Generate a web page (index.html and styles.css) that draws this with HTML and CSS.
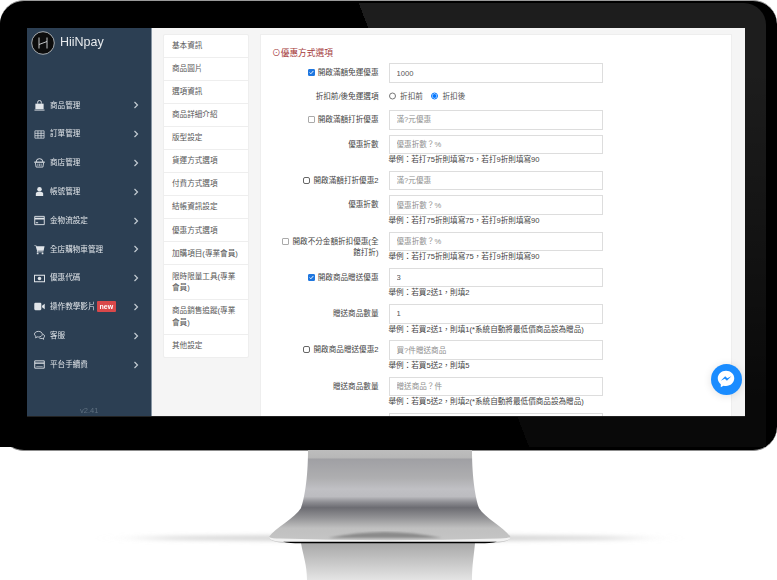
FILE: index.html
```html
<!DOCTYPE html>
<html lang="zh-Hant">
<head>
    <meta charset="UTF-8">
    <meta name="viewport" content="width=device-width, initial-scale=1.0">
    <title>HiiNpay</title>
    <link rel="stylesheet" href="styles.css">
</head>
<body>
    <div class="monitor">
        <div class="bezel">
            <div class="screen">
                <aside class="sidebar">
                    <div class="brand">
                        <svg class="brand-logo" viewBox="0 0 24 24">
                            <circle cx="12" cy="12" r="11.3" fill="#0c0c0c" stroke="#c9ced2" stroke-width="0.8"/>
                            <path d="M8 6.500V17.500M16 6.500V17.500M8 13.500L16 10.500" fill="none" stroke="#d8dbde" stroke-width="0.9"/>
                        </svg>
                        <span class="brand-name">HiiNpay</span>
                    </div>
                    <ul class="menu">
                        <li>
                            <svg class="menu-icon" viewBox="0 0 12 12"><path d="M4 4V2.500a2 2 0 0 1 4 0V4" fill="none" stroke="currentColor"/><path d="M1.500 4h9v6h-9z" fill="currentColor"/><path d="M.5 10.500h11v1H.5z" fill="currentColor"/></svg>
                            <span>商品管理</span>
                            <svg class="chevron" viewBox="0 0 6 8"><path d="M1.500 1L4.500 4L1.500 7" fill="none" stroke="currentColor" stroke-width="1.200"/></svg>
                        </li>
                        <li>
                            <svg class="menu-icon" viewBox="0 0 12 12"><path d="M1 2h10v8H1zM1 4.700h10M1 7.300h10M4.300 2v8M7.700 2v8" fill="none" stroke="currentColor" stroke-width="0.8"/></svg>
                            <span>訂單管理</span>
                            <svg class="chevron" viewBox="0 0 6 8"><path d="M1.500 1L4.500 4L1.500 7" fill="none" stroke="currentColor" stroke-width="1.200"/></svg>
                        </li>
                        <li>
                            <svg class="menu-icon" viewBox="0 0 12 12"><path d="M2.300 5.500a3.700 3.700 0 0 1 7.400 0" fill="none" stroke="currentColor"/><path d="M.3 5h11.400v1.300H.3z" fill="currentColor"/><path d="M1.500 6.300l.8 4.700h7.400l.8-4.700" fill="none" stroke="currentColor" stroke-width="0.9"/><path d="M4.200 7.200V10M6 7.200V10M7.800 7.200V10" stroke="currentColor" stroke-width="0.7"/></svg>
                            <span>商店管理</span>
                            <svg class="chevron" viewBox="0 0 6 8"><path d="M1.500 1L4.500 4L1.500 7" fill="none" stroke="currentColor" stroke-width="1.200"/></svg>
                        </li>
                        <li>
                            <svg class="menu-icon" viewBox="0 0 12 12"><circle cx="6" cy="3.500" r="2.500" fill="currentColor"/><path d="M2 11V8.500C2 7 3.500 6.300 6 6.300S10 7 10 8.500V11z" fill="currentColor"/></svg>
                            <span>帳號管理</span>
                            <svg class="chevron" viewBox="0 0 6 8"><path d="M1.500 1L4.500 4L1.500 7" fill="none" stroke="currentColor" stroke-width="1.200"/></svg>
                        </li>
                        <li>
                            <svg class="menu-icon" viewBox="0 0 12 12"><path d="M.8 1.500h10.400v9H.8z" fill="none" stroke="currentColor"/><path d="M.8 3h10.400v2H.8zM2 8h2.500v1H2z" fill="currentColor"/></svg>
                            <span>金物流設定</span>
                            <svg class="chevron" viewBox="0 0 6 8"><path d="M1.500 1L4.500 4L1.500 7" fill="none" stroke="currentColor" stroke-width="1.200"/></svg>
                        </li>
                        <li>
                            <svg class="menu-icon" viewBox="0 0 12 12"><path d="M.3 1.500h2.200l.3 1h8.700l-1 4.800H4l-.2.900h6.500v.8H3l.3-1.700-1.500-5H.3z" fill="currentColor"/><circle cx="4" cy="10.300" r="1" fill="currentColor"/><circle cx="9.300" cy="10.300" r="1" fill="currentColor"/></svg>
                            <span>全店購物車管理</span>
                            <svg class="chevron" viewBox="0 0 6 8"><path d="M1.500 1L4.500 4L1.500 7" fill="none" stroke="currentColor" stroke-width="1.200"/></svg>
                        </li>
                        <li>
                            <svg class="menu-icon" viewBox="0 0 12 12"><path d="M.5 2.500h11v7H.5z" fill="none" stroke="currentColor" stroke-width="1.100"/><circle cx="6" cy="6" r="1.900" fill="currentColor"/></svg>
                            <span>優惠代碼</span>
                            <svg class="chevron" viewBox="0 0 6 8"><path d="M1.500 1L4.500 4L1.500 7" fill="none" stroke="currentColor" stroke-width="1.200"/></svg>
                        </li>
                        <li>
                            <svg class="menu-icon" viewBox="0 0 12 12"><rect x="0.300" y="2" width="7.700" height="8" rx="1.200" fill="currentColor"/><path d="M8.800 5.300l2.900-2.300v6l-2.900-2.300z" fill="currentColor"/></svg>
                            <span>操作教學影片</span>
                            <span class="badge">new</span>
                            <svg class="chevron" viewBox="0 0 6 8"><path d="M1.500 1L4.500 4L1.500 7" fill="none" stroke="currentColor" stroke-width="1.200"/></svg>
                        </li>
                        <li>
                            <svg class="menu-icon" viewBox="0 0 12 12"><path d="M4.800 1.500c2.400 0 4.300 1.300 4.300 3.100S7.200 7.700 4.800 7.700c-.5 0-1 0-1.400-.2L1.800 8.600l.3-1.700C1.100 6.300.5 5.500.5 4.600c0-1.800 1.900-3.100 4.300-3.100z" fill="none" stroke="currentColor" stroke-width="0.9"/><path d="M10 4.500c1 .6 1.500 1.400 1.500 2.200s-.5 1.500-1.200 2l.2 1.500-1.500-1c-1 .2-2.300.1-3.200-.4" fill="none" stroke="currentColor" stroke-width="0.9"/></svg>
                            <span>客服</span>
                            <svg class="chevron" viewBox="0 0 6 8"><path d="M1.500 1L4.500 4L1.500 7" fill="none" stroke="currentColor" stroke-width="1.200"/></svg>
                        </li>
                        <li>
                            <svg class="menu-icon" viewBox="0 0 12 12"><path d="M.8 2h10.400v8H.8z" fill="none" stroke="currentColor"/><path d="M.8 3.700h10.400v1.500H.8zM2.500 7.500h7v.8h-7z" fill="currentColor"/></svg>
                            <span>平台手續費</span>
                            <svg class="chevron" viewBox="0 0 6 8"><path d="M1.500 1L4.500 4L1.500 7" fill="none" stroke="currentColor" stroke-width="1.200"/></svg>
                        </li>
                    </ul>
                    <div class="version">v2.41</div>
                </aside>

                <div class="content">
                    <ul class="tabs">
                        <li>基本資訊</li>
                        <li>商品圖片</li>
                        <li>選項資訊</li>
                        <li>商品詳細介紹</li>
                        <li>版型設定</li>
                        <li>貨運方式選項</li>
                        <li>付費方式選項</li>
                        <li>結帳資訊設定</li>
                        <li>優惠方式選項</li>
                        <li>加購項目(專業會員)</li>
                        <li>限時限量工具(專業會員)</li>
                        <li>商品銷售追蹤(專業會員)</li>
                        <li>其他設定</li>
                    </ul>

                    <section class="panel">
                        <h2 class="panel-title">⊙優惠方式選項</h2>
                        <form class="form">
                            <label class="field-label"><input class="check" type="checkbox" checked> 開啟滿額免運優惠</label>
                            <div class="field tall"><input class="text-input" type="text" value="1000"></div>

                            <label class="field-label radio-label">折扣前/後免運選項</label>
                            <div class="field radios">
                                <label><input type="radio" name="when"> 折扣前</label>
                                <label><input type="radio" name="when" checked> 折扣後</label>
                            </div>

                            <label class="field-label"><input class="check" type="checkbox"> 開啟滿額打折優惠</label>
                            <div class="field"><input class="text-input" type="text" placeholder="滿?元優惠"></div>

                            <label class="field-label">優惠折數</label>
                            <div class="field">
                                <input class="text-input" type="text" placeholder="優惠折數？%">
                                <p class="hint">舉例：若打75折則填寫75，若打9折則填寫90</p>
                            </div>

                            <label class="field-label"><input class="check dark" type="checkbox"> 開啟滿額打折優惠2</label>
                            <div class="field"><input class="text-input" type="text" placeholder="滿?元優惠"></div>

                            <label class="field-label">優惠折數</label>
                            <div class="field">
                                <input class="text-input" type="text" placeholder="優惠折數？%">
                                <p class="hint">舉例：若打75折則填寫75，若打9折則填寫90</p>
                            </div>

                            <label class="field-label"><input class="check" type="checkbox"> 開啟不分金額折扣優惠(全館打折)</label>
                            <div class="field">
                                <input class="text-input" type="text" placeholder="優惠折數？%">
                                <p class="hint">舉例：若打75折則填寫75，若打9折則填寫90</p>
                            </div>

                            <label class="field-label"><input class="check" type="checkbox" checked> 開啟商品贈送優惠</label>
                            <div class="field">
                                <input class="text-input" type="text" value="3">
                                <p class="hint">舉例：若買2送1，則填2</p>
                            </div>

                            <label class="field-label">贈送商品數量</label>
                            <div class="field">
                                <input class="text-input" type="text" value="1">
                                <p class="hint">舉例：若買2送1，則填1(*系統自動將最低價商品設為贈品)</p>
                            </div>

                            <label class="field-label"><input class="check dark" type="checkbox"> 開啟商品贈送優惠2</label>
                            <div class="field">
                                <input class="text-input" type="text" placeholder="買?件贈送商品">
                                <p class="hint">舉例：若買5送2，則填5</p>
                            </div>

                            <label class="field-label">贈送商品數量</label>
                            <div class="field">
                                <input class="text-input" type="text" placeholder="贈送商品？件">
                                <p class="hint">舉例：若買5送2，則填2(*系統自動將最低價商品設為贈品)</p>
                            </div>

                            <label class="field-label"></label>
                            <div class="field"><input class="text-input" type="text"></div>
                        </form>
                    </section>
                </div>

                <div class="messenger">
                    <svg viewBox="0 0 24 24">
                        <path d="M12 3C7 3 3 6.700 3 11.300c0 2.600 1.300 4.800 3.300 6.300V21l3-1.700c.9.300 1.800.400 2.700.400 5 0 9-3.700 9-8.400S17 3 12 3z" fill="#fff"/>
                        <path d="M13 14l-2.300-2.400L6.300 14l4.800-5.100 2.300 2.400 4.400-2.400z" fill="#1a8cff"/>
                    </svg>
                </div>
            </div>
        </div>
    </div>

    <svg class="stand" viewBox="0 0 777 130">
        <defs>
            <linearGradient id="neck" gradientUnits="userSpaceOnUse" x1="0" y1="0" x2="0" y2="93">
                <stop offset="0" stop-color="#bdbdbd"/>
                <stop offset="0.08" stop-color="#b8b8b8"/>
                <stop offset="0.1" stop-color="#a0a0a4"/>
                <stop offset="0.3" stop-color="#aeaeb0"/>
                <stop offset="0.42" stop-color="#c0c0c4"/>
                <stop offset="0.5" stop-color="#bcbcc0"/>
                <stop offset="0.56" stop-color="#8e8e93"/>
                <stop offset="0.62" stop-color="#6c6c72"/>
                <stop offset="0.72" stop-color="#8f8f92"/>
                <stop offset="0.84" stop-color="#c0c0c0"/>
                <stop offset="1" stop-color="#c6c6c6"/>
            </linearGradient>
            <linearGradient id="mirror" x1="0" y1="0" x2="0" y2="1">
                <stop offset="0" stop-color="#a8a8a8"/>
                <stop offset="1" stop-color="#e4e4e4"/>
            </linearGradient>
            <filter id="soft" x="-10%" y="-200%" width="120%" height="500%">
                <feGaussianBlur stdDeviation="22 2"/>
            </filter>
            <filter id="hump"><feGaussianBlur stdDeviation="1"/></filter>
        </defs>
        <ellipse cx="390" cy="88" rx="250" ry="3" fill="#d2d2d2" filter="url(#soft)"/>
        <path d="M301 93H475C474 105 472 115 472 130H307C307 115 303 105 301 93Z" fill="url(#mirror)"/>
        <path d="M308 0H472C472 30 476 50 479 58C485 68 505 78 510.500 87C511 91 500 93 490 93H290C278 93 269 91 269 87C275 78 295 68 301 58C304 50 308 30 308 0Z" fill="url(#neck)"/>
        <path d="M328 88Q385 76 442 88Z" fill="#8a8a8a" filter="url(#hump)"/>
        <path d="M280 88.500Q385 92 500 88.500Q510 88 510.500 87C511 91 500 92 490 92H290C278 92 269 91 269 87Q272 88.500 280 88.500Z" fill="#f2f2f2"/>
        <path d="M283 91.800H497Q490 93.300 480 93.300H300Q290 93.300 283 91.800Z" fill="#000"/>
    </svg>
</body>
</html>
```

FILE: styles.css
```css
html, body {
    margin: 0;
    padding: 0;
    background: #fff;
    overflow: hidden;
}
body {
    width: 777px;
    height: 580px;
    font-family: "Liberation Sans", "Noto Sans CJK TC", sans-serif;
    font-size: 7.6px;
    line-height: 11.5px;
    color: #555;
}
ul {
    list-style: none;
    margin: 0;
    padding: 0;
}

/* monitor */
.monitor {
    box-sizing: border-box;
    width: 777px;
    height: 451px;
    padding: 2px 11px 3px 0;
    background: #000;
    border-top: 1px solid #9a9a9a;
    border-bottom: 1px solid #8c8c8c;
    border-radius: 24px;
}
.bezel {
    box-sizing: border-box;
    height: 100%;
    padding: 25px 21px 0 27px;
    border-radius: 22px 22px 0 0;
    background:
        linear-gradient(180deg, rgba(0,0,0,0) 15%, rgba(0,0,0,0.7) 90%),
        linear-gradient(69deg, #000 56.5%, #1d1d1d 56.5%);
}
.screen {
    position: relative;
    display: flex;
    height: 388px;
    overflow: hidden;
    background: #f5f5f5;
    box-shadow: 0 1px 0 #222;
    filter: blur(0.25px);
}

/* sidebar */
.sidebar {
    position: relative;
    box-sizing: border-box;
    flex: 0 0 125px;
    background: #2c3f53;
    border-right: 1px solid #8795a3;
    color: #e2e6ea;
}
.brand {
    display: flex;
    align-items: flex-start;
    gap: 5px;
    height: 63px;
    padding: 3px 0 0 4px;
    box-sizing: border-box;
}
.brand-logo {
    width: 24px;
    height: 24px;
}
.brand-name {
    font-size: 12.500px;
    line-height: 22px;
    color: #e8ebee;
}
.menu li {
    display: flex;
    align-items: center;
    height: 28.800px;
    padding-left: 7px;
}
.menu-icon {
    flex: 0 0 11px;
    width: 11px;
    height: 11px;
    margin-right: 5px;
}
.chevron {
    position: absolute;
    left: 106px;
    width: 6px;
    height: 8px;
    color: #c3cbd2;
}
.badge {
    margin-left: 1px;
    padding: 0 3px;
    background: #d9484a;
    border-radius: 1px;
    color: #fff;
    font-size: 7px;
    font-weight: bold;
    line-height: 11px;
}
.version {
    position: absolute;
    left: 53px;
    bottom: 0;
    color: #5f7080;
    font-size: 7.500px;
}

/* tabs */
.content {
    display: flex;
    flex: 1;
    gap: 11px;
    padding: 5.500px 13px 0 11px;
    min-width: 0;
}
.tabs {
    flex: 0 0 86px;
    align-self: flex-start;
    background: #fff;
    border: 1px solid #eee;
    border-radius: 2px;
    box-sizing: border-box;
}
.tabs li {
    padding: 5.300px 8px;
    border-bottom: 1px solid #eee;
    color: #555;
}
.tabs li:last-child {
    border-bottom: none;
}

/* form panel */
.panel {
    flex: 1;
    box-sizing: border-box;
    height: 400px;
    padding: 13px 11px 0 11px;
    background: #fff;
    border: 1px solid #eee;
    overflow: hidden;
}
.panel-title {
    margin: 0 0 4.500px;
    color: #a53a3a;
    font-size: 8.700px;
    font-weight: normal;
    line-height: 11px;
}
.form {
    display: grid;
    grid-template-columns: 106.500px 214px;
    column-gap: 10px;
    row-gap: 5px;
}
.field-label {
    padding: 4px 0 0 8px;
    color: #444;
    text-align: right;
}
.radio-label {
    padding-top: 3px;
}
.check {
    appearance: none;
    box-sizing: border-box;
    width: 7px;
    height: 7px;
    margin: 0 1px 0 0;
    background: #fff;
    border: 1px solid #aaa;
    border-radius: 1px;
    vertical-align: -1px;
}
.check.dark {
    border-color: #666;
    border-radius: 2px;
}
.check:checked {
    border-color: #1f77e0;
    background: #1f77e0 url("data:image/svg+xml,%3Csvg xmlns='http://www.w3.org/2000/svg' viewBox='0 0 8 8'%3E%3Cpath d='M1 4l2 2 4-4.500' fill='none' stroke='%23fff' stroke-width='1.500'/%3E%3C/svg%3E") center / 100% no-repeat;
}
.field.radios {
    display: flex;
    align-items: center;
    gap: 8px;
    height: 17px;
}
.radios input {
    width: 7.500px;
    height: 7.500px;
    margin: 0 2px 0 0;
    vertical-align: -1px;
}
.text-input {
    display: block;
    box-sizing: border-box;
    width: 214px;
    height: 19.500px;
    padding: 0 7px;
    background: #fff;
    border: 1px solid #ddd;
    border-radius: 0;
    outline: none;
    font: inherit;
    color: #555;
}
.text-input::placeholder {
    color: #8f8f8f;
}
.tall .text-input {
    height: 20px;
}
.hint {
    margin: 0;
    height: 11.750px;
    line-height: 12px;
    color: #444;
}

/* chat button */
.messenger {
    position: absolute;
    right: 3.500px;
    bottom: 21.500px;
    display: flex;
    align-items: center;
    justify-content: center;
    width: 31px;
    height: 31px;
    background: #1a8cff;
    border-radius: 50%;
    box-shadow: 0 1px 8px rgba(0,0,0,0.12);
}
.messenger svg {
    width: 22px;
    height: 22px;
}

/* stand */
.stand {
    display: block;
    width: 777px;
    height: 130px;
    margin-top: -1px;
}
```
